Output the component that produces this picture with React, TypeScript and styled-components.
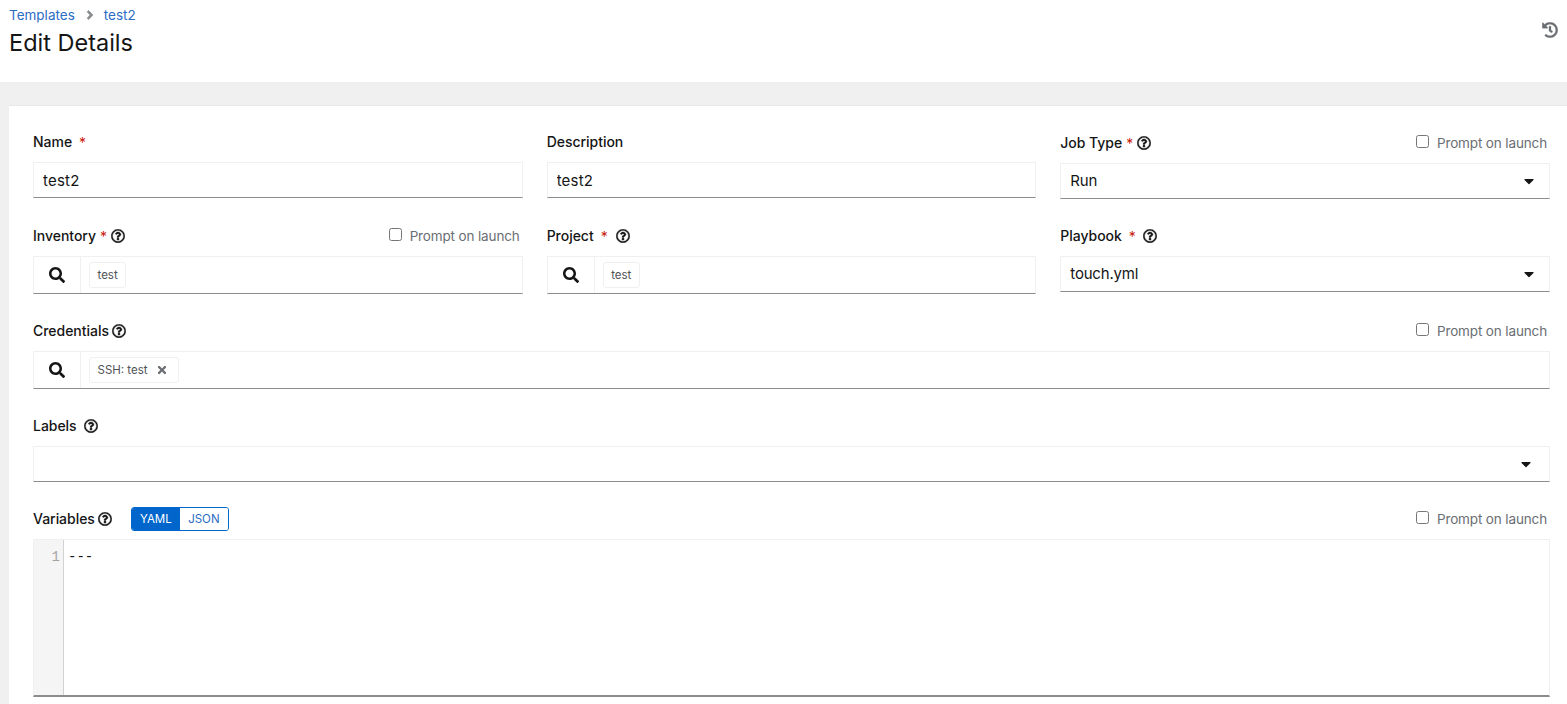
import styled, { createGlobalStyle } from "styled-components";
import { FaCaretDown, FaHistory, FaRegQuestionCircle, FaSearch, FaTimes, FaAngleRight } from "react-icons/fa";

const GlobalStyle = createGlobalStyle`
  html, body {
    margin: 0;
    height: 100%;
    overflow: hidden;
    background: #f0f0f0;
    font-family: Inter, "Noto Sans", "Liberation Sans", sans-serif;
    color: #151515;
  }
  * { box-sizing: border-box; }
`;

const Header = styled.header`
  height: 82px;
  background: #fff;
  padding: 8px 9px 0 9px;
  display: flex;
  justify-content: space-between;
`;

const Breadcrumb = styled.nav`
  display: flex;
  align-items: center;
  height: 14px;
  font-size: 13.5px;
  color: #2b6cc4;
`;

const CrumbSep = styled.span`
  display: flex;
  margin: 0 7px 0 8px;
  color: #8a8d90;
  font-size: 14px;
  svg { stroke: currentColor; stroke-width: 20; }
`;

const Title = styled.h1`
  margin: 6px 0 0 0;
  font-size: 23.5px;
  font-weight: 400;
  line-height: 30px;
  color: #151515;
`;

const HistoryButton = styled.div`
  display: flex;
  margin: 14px 0 0 0;
  color: #6a6e73;
  font-size: 16px;
  svg { stroke: currentColor; stroke-width: 10; }
`;

const Card = styled.main`
  margin: 23px 0 0 9px;
  height: 620px;
  background: #fff;
  border-top: 1px solid #e8e8e8;
  padding: 26px 17px 0 24px;
`;

const Form = styled.form`
  display: grid;
  grid-template-columns: repeat(3, 1fr);
  column-gap: 24px;
  row-gap: 27px;
  align-items: start;
`;

const Field = styled.div<{ $full?: boolean }>`
  min-width: 0;
  ${(p) => p.$full && "grid-column: 1 / -1;"}
`;

const LabelRow = styled.div<{ $low?: boolean }>`
  display: flex;
  align-items: center;
  height: ${(p) => (p.$low ? "21px" : "20px")};
  padding-top: ${(p) => (p.$low ? "1px" : "0")};
  margin-bottom: 10px;
`;

const Label = styled.label`
  margin-bottom: 2px;
  font-size: 14px;
  font-weight: 500;
  letter-spacing: -0.03px;
  color: #151515;
`;

const Required = styled.span<{ $wide?: boolean }>`
  margin-left: ${(p) => (p.$wide ? "7px" : "4px")};
  font-size: 14px;
  color: #c9190b;
`;

const Help = styled.span<{ $gap?: number }>`
  display: flex;
  margin-left: ${(p) => p.$gap ?? 4}px;
  font-size: 14px;
  color: #151515;
  svg { stroke: currentColor; stroke-width: 14; }
`;

const Prompt = styled.label`
  display: flex;
  align-items: center;
  margin-left: auto;
  padding-right: 3px;
  font-size: 13.5px;
  letter-spacing: -0.14px;
  color: #6a6e73;
`;

const PromptBox = styled.input`
  width: 13px;
  height: 13px;
  margin: 0 8px 4px 0;
`;

const TextInput = styled.input`
  display: block;
  width: 100%;
  height: 36px;
  padding: 0 9px;
  border: 1px solid #f0f0f0;
  border-bottom-color: #8a8d90;
  outline: none;
  background: #fff;
  font: inherit;
  font-size: 15px;
  letter-spacing: 0.2px;
  color: #151515;
`;

const Select = styled.div<{ $caretRight?: number }>`
  display: flex;
  align-items: center;
  justify-content: space-between;
  height: 36px;
  padding: 0 ${(p) => p.$caretRight ?? 12}px 0 9px;
  border: 1px solid #f0f0f0;
  border-bottom-color: #8a8d90;
  font-size: 15px;
  letter-spacing: -0.2px;
  color: #151515;
  svg { font-size: 16px; color: #151515; }
`;

const SelectValue = styled.span`
  margin-bottom: 1px;
`;

const Lookup = styled.div`
  display: flex;
  height: 38px;
  border: 1px solid #f0f0f0;
  border-bottom-color: #8a8d90;
`;

const SearchButton = styled.div`
  flex: none;
  display: flex;
  align-items: center;
  justify-content: center;
  width: 47px;
  border-right: 1px solid #f0f0f0;
  font-size: 16px;
  color: #151515;
`;

const ChipArea = styled.div`
  display: flex;
  align-items: center;
  padding-left: 8px;
`;

const Chip = styled.span`
  display: inline-flex;
  align-items: center;
  height: 26px;
  padding: 0 7.5px;
  border: 1px solid #f0f0f0;
  border-radius: 3px;
  font-size: 11.5px;
  color: #4f5255;
`;

const ChipClose = styled.span`
  display: flex;
  margin: 0 3px 0 8px;
  font-size: 12px;
  color: #6a6e73;
`;

const Toggle = styled.div`
  display: flex;
  margin-left: 19px;
  height: 24px;
  border: 1px solid #06c;
  border-radius: 3px;
  overflow: hidden;
`;

const ToggleItem = styled.span<{ $active?: boolean }>`
  display: flex;
  align-items: center;
  justify-content: center;
  width: 48px;
  font-size: 11.5px;
  background: ${(p) => (p.$active ? "#06c" : "#fff")};
  color: ${(p) => (p.$active ? "#fff" : "#2b6cc4")};
`;

const Editor = styled.div`
  display: flex;
  height: 158px;
  border: 1px solid #f0f0f0;
  border-bottom: 2px solid #8a8d90;
  font-family: "Liberation Mono", monospace;
  font-size: 14px;
`;

const Gutter = styled.div`
  flex: none;
  width: 30px;
  padding: 9px 3px 0 0;
  background: #f5f5f5;
  border-right: 1px solid #d2d2d2;
  text-align: right;
  color: #a3a3a3;
  line-height: 16px;
`;

const Code = styled.div`
  padding: 9px 0 0 4px;
  line-height: 16px;
  color: #151515;
`;

function PromptOnLaunch() {
  return (
    <Prompt>
      <PromptBox type="checkbox" />
      Prompt on launch
    </Prompt>
  );
}

export default function App() {
  return (
    <>
      <GlobalStyle />
      <Header>
        <div>
          <Breadcrumb>
            Templates
            <CrumbSep>
              <FaAngleRight />
            </CrumbSep>
            test2
          </Breadcrumb>
          <Title>Edit Details</Title>
        </div>
        <HistoryButton>
          <FaHistory />
        </HistoryButton>
      </Header>
      <Card>
        <Form>
          <Field>
            <LabelRow>
              <Label>Name</Label>
              <Required $wide>*</Required>
            </LabelRow>
            <TextInput defaultValue="test2" />
          </Field>
          <Field>
            <LabelRow>
              <Label>Description</Label>
            </LabelRow>
            <TextInput defaultValue="test2" />
          </Field>
          <Field>
            <LabelRow $low>
              <Label>Job Type</Label>
              <Required>*</Required>
              <Help>
                <FaRegQuestionCircle />
              </Help>
              <PromptOnLaunch />
            </LabelRow>
            <Select>
              <SelectValue>Run</SelectValue>
              <FaCaretDown />
            </Select>
          </Field>

          <Field>
            <LabelRow>
              <Label>Inventory</Label>
              <Required>*</Required>
              <Help>
                <FaRegQuestionCircle />
              </Help>
              <PromptOnLaunch />
            </LabelRow>
            <Lookup>
              <SearchButton>
                <FaSearch />
              </SearchButton>
              <ChipArea>
                <Chip>test</Chip>
              </ChipArea>
            </Lookup>
          </Field>
          <Field>
            <LabelRow>
              <Label>Project</Label>
              <Required $wide>*</Required>
              <Help $gap={8}>
                <FaRegQuestionCircle />
              </Help>
            </LabelRow>
            <Lookup>
              <SearchButton>
                <FaSearch />
              </SearchButton>
              <ChipArea>
                <Chip>test</Chip>
              </ChipArea>
            </Lookup>
          </Field>
          <Field>
            <LabelRow>
              <Label>Playbook</Label>
              <Required $wide>*</Required>
              <Help $gap={7}>
                <FaRegQuestionCircle />
              </Help>
            </LabelRow>
            <Select>
              <SelectValue>touch.yml</SelectValue>
              <FaCaretDown />
            </Select>
          </Field>

          <Field $full>
            <LabelRow>
              <Label>Credentials</Label>
              <Help $gap={3}>
                <FaRegQuestionCircle />
              </Help>
              <PromptOnLaunch />
            </LabelRow>
            <Lookup>
              <SearchButton>
                <FaSearch />
              </SearchButton>
              <ChipArea>
                <Chip>
                  SSH: test
                  <ChipClose>
                    <FaTimes />
                  </ChipClose>
                </Chip>
              </ChipArea>
            </Lookup>
          </Field>

          <Field $full>
            <LabelRow>
              <Label>Labels</Label>
              <Help $gap={7}>
                <FaRegQuestionCircle />
              </Help>
            </LabelRow>
            <Select $caretRight={15}>
              <span />
              <FaCaretDown />
            </Select>
          </Field>

          <Field $full>
            <LabelRow>
              <Label>Variables</Label>
              <Help $gap={3}>
                <FaRegQuestionCircle />
              </Help>
              <Toggle>
                <ToggleItem $active>YAML</ToggleItem>
                <ToggleItem>JSON</ToggleItem>
              </Toggle>
              <PromptOnLaunch />
            </LabelRow>
            <Editor>
              <Gutter>1</Gutter>
              <Code>---</Code>
            </Editor>
          </Field>
        </Form>
      </Card>
    </>
  );
}
